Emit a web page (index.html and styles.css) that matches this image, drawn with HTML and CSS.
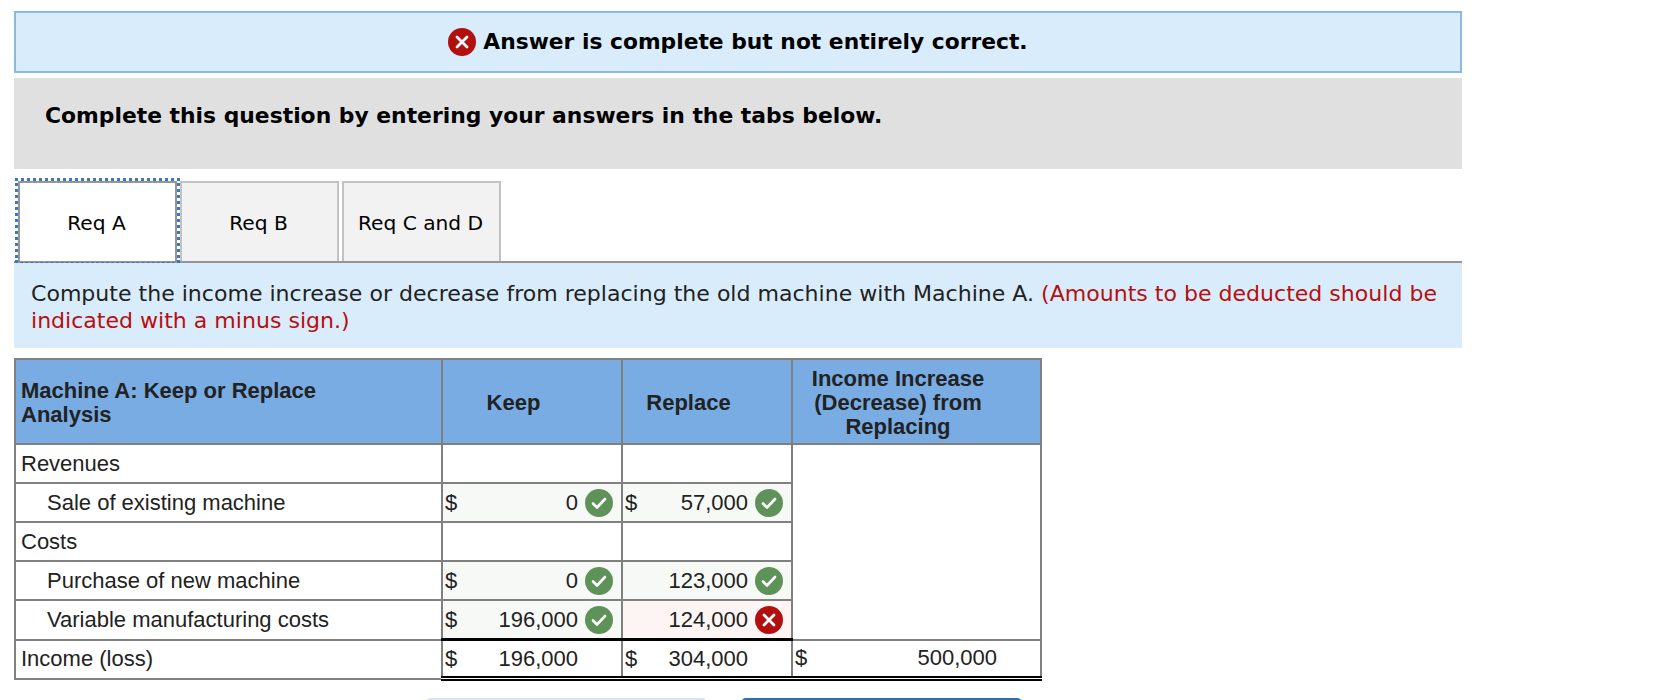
FILE: index.html
```html
<!DOCTYPE html>
<html lang="en">
<head>
<meta charset="utf-8">
<title>Answer</title>
<link rel="stylesheet" href="styles.css">
</head>
<body>
<main class="page">
  <div class="result">
    <svg class="icon" viewBox="0 0 28 28"><circle cx="14" cy="14" r="14" fill="#b2100f"/><path d="M9 9l10 10M19 9L9 19" stroke="#fff" stroke-width="2.8" stroke-linecap="round"/></svg>
    <strong>Answer is complete but not entirely correct.</strong>
  </div>
  <div class="prompt">Complete this question by entering your answers in the tabs below.</div>
  <div class="tabs">
    <div class="tab active">Req A</div>
    <div class="tab">Req B</div>
    <div class="tab">Req C and D</div>
  </div>
  <div class="instruction">Compute the income increase or decrease from replacing the old machine with Machine A. <span class="red">(Amounts to be deducted should be indicated with a minus sign.)</span></div>
  <table class="sheet">
    <colgroup><col class="c1"><col class="c2"><col class="c3"><col class="c4"></colgroup>
    <thead>
      <tr>
        <th class="lead">Machine A: Keep or Replace Analysis</th>
        <th>Keep</th>
        <th>Replace</th>
        <th>Income Increase (Decrease) from Replacing</th>
      </tr>
    </thead>
    <tbody>
      <tr>
        <td>Revenues</td><td></td><td></td>
        <td rowspan="5"></td>
      </tr>
      <tr>
        <td class="sub">Sale of existing machine</td>
        <td class="ok"><div class="val"><span>$</span><span class="num">0</span><svg class="icon" viewBox="0 0 28 28"><circle cx="14" cy="14" r="14" fill="#5e9259"/><path d="M8 14.5l4 4 8-8.5" fill="none" stroke="#fff" stroke-width="2.6" stroke-linecap="round" stroke-linejoin="round"/></svg></div></td>
        <td class="ok"><div class="val"><span>$</span><span class="num">57,000</span><svg class="icon" viewBox="0 0 28 28"><circle cx="14" cy="14" r="14" fill="#5e9259"/><path d="M8 14.5l4 4 8-8.5" fill="none" stroke="#fff" stroke-width="2.6" stroke-linecap="round" stroke-linejoin="round"/></svg></div></td>
      </tr>
      <tr>
        <td>Costs</td><td></td><td></td>
      </tr>
      <tr>
        <td class="sub">Purchase of new machine</td>
        <td class="ok"><div class="val"><span>$</span><span class="num">0</span><svg class="icon" viewBox="0 0 28 28"><circle cx="14" cy="14" r="14" fill="#5e9259"/><path d="M8 14.5l4 4 8-8.5" fill="none" stroke="#fff" stroke-width="2.6" stroke-linecap="round" stroke-linejoin="round"/></svg></div></td>
        <td class="ok"><div class="val"><span class="num">123,000</span><svg class="icon" viewBox="0 0 28 28"><circle cx="14" cy="14" r="14" fill="#5e9259"/><path d="M8 14.5l4 4 8-8.5" fill="none" stroke="#fff" stroke-width="2.6" stroke-linecap="round" stroke-linejoin="round"/></svg></div></td>
      </tr>
      <tr class="pre">
        <td class="sub">Variable manufacturing costs</td>
        <td class="ok"><div class="val"><span>$</span><span class="num">196,000</span><svg class="icon" viewBox="0 0 28 28"><circle cx="14" cy="14" r="14" fill="#5e9259"/><path d="M8 14.5l4 4 8-8.5" fill="none" stroke="#fff" stroke-width="2.6" stroke-linecap="round" stroke-linejoin="round"/></svg></div></td>
        <td class="bad"><div class="val"><span class="num">124,000</span><svg class="icon" viewBox="0 0 28 28"><circle cx="14" cy="14" r="14" fill="#b2100f"/><path d="M9 9l10 10M19 9L9 19" stroke="#fff" stroke-width="2.8" stroke-linecap="round"/></svg></div></td>
      </tr>
      <tr class="total">
        <td>Income (loss)</td>
        <td class="sum"><div class="val"><span>$</span><span class="num">196,000</span><span class="slot"></span></div></td>
        <td class="sum"><div class="val"><span>$</span><span class="num">304,000</span><span class="slot"></span></div></td>
        <td class="sum last"><div class="val"><span>$</span><span class="num">500,000</span><span class="slot"></span></div></td>
      </tr>
    </tbody>
  </table>
  <div class="actions">
    <div class="btn light"></div>
    <div class="btn dark"></div>
  </div>
</main>
</body>
</html>
```
FILE: styles.css
```css
html, body {
  margin: 0;
  height: 700px;
  overflow: hidden;
  background: #fff;
}
.page {
  width: 1448px;
  height: 700px;
  box-sizing: border-box;
  overflow: hidden;
  margin-left: 14px;
  padding-top: 11px;
  color: #000;
  font-family: "DejaVu Sans", sans-serif;
}
.result {
  height: 62px;
  box-sizing: border-box;
  border: 2px solid #8cb9e1;
  background: #d9ecfb;
  display: flex;
  align-items: center;
  justify-content: center;
  gap: 7px;
  font-size: 21.8px;
}
.result strong {
  padding-bottom: 2px;
}
.prompt {
  height: 91px;
  box-sizing: border-box;
  margin-top: 5px;
  background: #e0e0e0;
  padding: 25px 31px 0;
  font-size: 21.85px;
  font-weight: bold;
  line-height: 26px;
}
.tabs {
  display: flex;
  gap: 3px;
  margin-top: 12px;
  padding-left: 4px;
  border-bottom: 2px solid #959595;
  height: 80px;
}
.tab {
  width: 159px;
  box-sizing: border-box;
  border: 2px solid #c2c2c2;
  border-bottom: 0;
  background: #f2f2f2;
  display: flex;
  align-items: center;
  justify-content: center;
  font-size: 20.2px;
  padding: 2px 2px 0 0;
}
.tab.active {
  position: relative;
  background: #fff;
  border-color: #959595;
}
.tab.active::after {
  content: "";
  position: absolute;
  left: -5px;
  right: -5px;
  top: -5px;
  bottom: -2px;
  border: 3px dotted #3b78bd;
  border-bottom: 1px dashed #3b78bd;
}
.instruction {
  height: 85px;
  box-sizing: border-box;
  background: #d9ecfb;
  padding: 18px 17px 0;
  font-size: 22.05px;
  line-height: 26.5px;
  color: #222;
}
.red {
  color: #b70f0f;
}
.sheet {
  margin-top: 10px;
  border-collapse: collapse;
  table-layout: fixed;
  width: 1026px;
  font-family: "Liberation Sans", Arial, sans-serif;
  font-size: 22px;
  color: #222;
}
.c1 { width: 427px; }
.c2 { width: 180px; }
.c3 { width: 170px; }
.c4 { width: 249px; }
.sheet th, .sheet td {
  border: 2px solid #808080;
  padding: 0;
}
.sheet th {
  height: 81px;
  background: #78ace3;
  line-height: 24px;
  padding: 2px 41px 0 4px;
  font-weight: bold;
  text-align: center;
}
.sheet th.lead {
  text-align: left;
  padding: 2px 80px 0 5px;
}
.sheet td {
  height: 37px;
  padding-left: 5px;
}
.sheet td.sub {
  padding-left: 31px;
}
.sheet td.ok, .sheet td.bad, .sheet td.sum {
  padding: 0 8px 0 2px;
}
.ok { background: #f6f9f6; }
.bad { background: #fdf5f4; }
.val {
  display: flex;
  align-items: center;
  gap: 7px;
}
.num {
  margin-left: auto;
}
.icon {
  width: 28px;
  height: 28px;
  flex: none;
}
.slot {
  width: 28px;
  flex: none;
}
.sheet .pre td {
  height: 37px;
}
.sheet .pre td.ok, .sheet .pre td.bad {
  border-bottom: 3px solid #000;
}
.sheet .total td {
  height: 35px;
}
.sheet .total td.sum {
  border-bottom: 5px double #000;
}
.actions {
  display: flex;
  gap: 34px;
  margin-top: 17px;
  padding-left: 412px;
}
.btn {
  width: 281px;
  height: 44px;
  flex: none;
  border-radius: 5px;
}
.light { background: #d6e4f2; }
.dark { background: #2f6fb0; }
```
